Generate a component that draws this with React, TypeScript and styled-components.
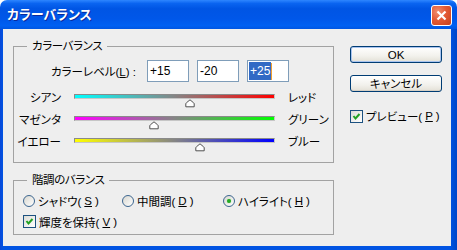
import styled, { createGlobalStyle } from "styled-components";

const GlobalStyle = createGlobalStyle`
  html, body {
    margin: 0;
    padding: 0;
    background: #ffffff;
  }

  #root {
    width: 457px;
    height: 250px;
    overflow: hidden;
  }
`;

const Window = styled.div`
  width: 457px;
  height: 250px;
  display: flex;
  flex-direction: column;
  font-family: "Liberation Sans", "Noto Sans CJK JP", sans-serif;
  font-size: 11.5px;
  font-feature-settings: "palt";
  color: #000000;
`;

const TitleBar = styled.div`
  height: 29px;
  flex: none;
  display: flex;
  align-items: center;
  justify-content: space-between;
  padding: 0 5px 0 7px;
  border-radius: 7px 7px 0 0;
  background: linear-gradient(
    to bottom,
    #2e86ff 0%,
    #0a64f0 12%,
    #0055e4 30%,
    #0057e9 65%,
    #0060f2 88%,
    #0056e2 100%
  );
`;

const Title = styled.span`
  color: #ffffff;
  font-weight: bold;
  font-size: 13px;
  line-height: 16px;
  text-shadow: 1px 1px 0 #0a2a9c;
`;

const CloseButton = styled.div`
  width: 21px;
  height: 21px;
  margin-top: 1px;
  box-sizing: border-box;
  border: 1px solid #ffffff;
  border-radius: 3px;
  display: flex;
  align-items: center;
  justify-content: center;
  background: radial-gradient(circle at 30% 30%, #f08e70 0%, #e35a35 45%, #c7401d 100%);
`;

const Frame = styled.div`
  flex: 1;
  display: flex;
  padding: 0 6px 4px 3px;
  background: linear-gradient(to right, #0a48d8, #0054e3 3px, #0054e3 450px, #0046c8);
`;

const Client = styled.div`
  flex: 1;
  display: flex;
  box-sizing: border-box;
  padding: 11px 0 0 10px;
  background: #eeeeee;
`;

const LeftColumn = styled.div`
  width: 321px;
  display: flex;
  flex-direction: column;
  gap: 11px;
`;

const Group = styled.fieldset<{ $pad: string }>`
  margin: 0;
  padding: ${(p) => p.$pad};
  width: 321px;
  min-width: 0;
  box-sizing: border-box;
  border: 1px solid #a2a2a2;
`;

const Legend = styled.legend`
  margin-left: 13px;
  padding: 0 5px;
  line-height: 13px;
  letter-spacing: -0.4px;
`;

const LevelRow = styled.div`
  display: flex;
  align-items: center;
  height: 22px;
  margin-bottom: 7px;
`;

const LevelLabel = styled.span`
  width: 122px;
  margin-right: 11px;
  text-align: right;
  white-space: nowrap;
`;

const LevelInputs = styled.div`
  display: flex;
  gap: 8px;
`;

const NumberBox = styled.div`
  width: 42px;
  height: 22px;
  box-sizing: border-box;
  border: 1px solid #7f9db9;
  background: #ffffff;
  display: flex;
  align-items: center;
  padding-left: 1px;
  font-size: 12px;
`;

const NumberText = styled.span<{ $selected?: boolean }>`
  padding: 0 1px;
  line-height: 18px;
  background: ${(p) => (p.$selected ? "#316ac5" : "transparent")};
  color: ${(p) => (p.$selected ? "#ffffff" : "#000000")};
`;

const Caret = styled.span`
  width: 1px;
  height: 17px;
  background: #f0a030;
`;

const SliderRow = styled.div`
  display: grid;
  grid-template-columns: 47px 201px auto;
  column-gap: 13px;
  height: 22px;
`;

const SideLabel = styled.span<{ $align: "left" | "right" }>`
  margin-top: 2px;
  line-height: 15px;
  text-align: ${(p) => p.$align};
  white-space: nowrap;
`;

const TrackArea = styled.div`
  position: relative;
  padding-top: 5px;
`;

const Track = styled.div<{ $from: string; $to: string }>`
  height: 5px;
  box-sizing: border-box;
  border: 1px solid;
  border-color: #8a8a8a #c6c6c6 #c6c6c6 #8a8a8a;
  background: linear-gradient(to right, ${(p) => p.$from}, #858585 50%, ${(p) => p.$to});
`;

const Thumb = styled.svg`
  position: absolute;
  top: 10px;
  transform: translateX(-50%);
`;

const OptionRow = styled.div<{ $cols: string }>`
  display: grid;
  grid-template-columns: ${(p) => p.$cols};
  height: 21px;
  padding-left: 9px;
  align-items: center;
`;

const Option = styled.label`
  display: flex;
  align-items: center;
  gap: 3px;
  white-space: nowrap;
`;

const Radio = styled.span<{ $checked?: boolean }>`
  width: 12px;
  height: 12px;
  box-sizing: border-box;
  border-radius: 50%;
  border: 1px solid #3c6690;
  background: linear-gradient(135deg, #d8d7d0, #ffffff);
  display: flex;
  align-items: center;
  justify-content: center;

  &::after {
    content: "";
    width: 4px;
    height: 4px;
    border-radius: 50%;
    background: ${(p) => (p.$checked ? "#24a924" : "transparent")};
    box-shadow: ${(p) => (p.$checked ? "0 0 1px #6fd06f" : "none")};
  }
`;

const CheckBox = styled.span`
  width: 13px;
  height: 13px;
  box-sizing: border-box;
  border: 1px solid #1c5180;
  background: linear-gradient(135deg, #dcdcd6, #ffffff);
  display: flex;
`;

const RightColumn = styled.div`
  width: 92px;
  margin-left: 16px;
  padding-top: 6px;
  display: flex;
  flex-direction: column;
`;

const Button = styled.div<{ $default?: boolean }>`
  height: 17px;
  box-sizing: border-box;
  border: 1px solid #003c74;
  border-radius: 3px;
  background: linear-gradient(to bottom, #ffffff, #f2f1ec 60%, #e3e0d6);
  box-shadow: ${(p) => (p.$default ? "inset 0 0 0 1px #a9c4ef" : "inset 0 -1px 0 #d6d0c5")};
  display: flex;
  align-items: center;
  justify-content: center;
  line-height: 14px;
  margin-bottom: 12px;
`;

const PreviewOption = styled(Option)`
  margin-top: 4px;
`;

const Check = () => (
  <CheckBox>
    <svg width="11" height="11" viewBox="0 0 11 11">
      <polyline points="2.5,5 4.5,7.5 8.5,3" fill="none" stroke="#21a121" strokeWidth="2" />
    </svg>
  </CheckBox>
);

const sliders = [
  { left: "シアン", right: "レッド", from: "#00ffff", to: "#ff0000", value: 15 },
  { left: "マゼンタ", right: "グリーン", from: "#ff00ff", to: "#00ff00", value: -20 },
  { left: "イエロー", right: "ブルー", from: "#ffff00", to: "#0000ff", value: 25 },
];

export default function App() {
  return (
    <>
      <GlobalStyle />
      <Window>
        <TitleBar>
          <Title>カラーバランス</Title>
          <CloseButton>
            <svg width="11" height="11" viewBox="0 0 11 11">
              <path d="M1.5 1.5 L9.5 9.5 M9.5 1.5 L1.5 9.5" stroke="#ffffff" strokeWidth="2.2" />
            </svg>
          </CloseButton>
        </TitleBar>
        <Frame>
          <Client>
            <LeftColumn>
              <Group $pad="7px 0 7px 0">
                <Legend>カラーバランス</Legend>
                <LevelRow>
                  <LevelLabel>
                    カラーレベル(<u>L</u>) :
                  </LevelLabel>
                  <LevelInputs>
                    <NumberBox>
                      <NumberText>+15</NumberText>
                    </NumberBox>
                    <NumberBox>
                      <NumberText>-20</NumberText>
                    </NumberBox>
                    <NumberBox>
                      <NumberText $selected>+25</NumberText>
                      <Caret />
                    </NumberBox>
                  </LevelInputs>
                </LevelRow>
                {sliders.map((s) => (
                  <SliderRow key={s.left}>
                    <SideLabel $align="right">{s.left}</SideLabel>
                    <TrackArea>
                      <Track $from={s.from} $to={s.to} />
                      <Thumb
                        width="10"
                        height="9"
                        viewBox="0 0 10 9"
                        style={{ left: `${((s.value + 100) / 200) * 100}%` }}
                      >
                        <path
                          d="M5 0.8 L8.6 3.8 Q9.2 4.3 9.2 5 L9.2 7.8 L0.8 7.8 L0.8 5 Q0.8 4.3 1.4 3.8 Z"
                          fill="#ffffff"
                          stroke="#505050"
                          strokeWidth="1"
                          strokeLinejoin="round"
                        />
                      </Thumb>
                    </TrackArea>
                    <SideLabel $align="left">{s.right}</SideLabel>
                  </SliderRow>
                ))}
              </Group>
              <Group $pad="3px 0 2px 0">
                <Legend>階調のバランス</Legend>
                <OptionRow $cols="99px 101px auto">
                  <Option>
                    <Radio />
                    シャドウ(<u>S</u>)
                  </Option>
                  <Option>
                    <Radio />
                    中間調(<u>D</u>)
                  </Option>
                  <Option>
                    <Radio $checked />
                    ハイライト(<u>H</u>)
                  </Option>
                </OptionRow>
                <OptionRow $cols="auto">
                  <Option>
                    <Check />
                    輝度を保持(<u>V</u>)
                  </Option>
                </OptionRow>
              </Group>
            </LeftColumn>
            <RightColumn>
              <Button $default>OK</Button>
              <Button>キャンセル</Button>
              <PreviewOption>
                <Check />
                プレビュー(<u>P</u>)
              </PreviewOption>
            </RightColumn>
          </Client>
        </Frame>
      </Window>
    </>
  );
}
